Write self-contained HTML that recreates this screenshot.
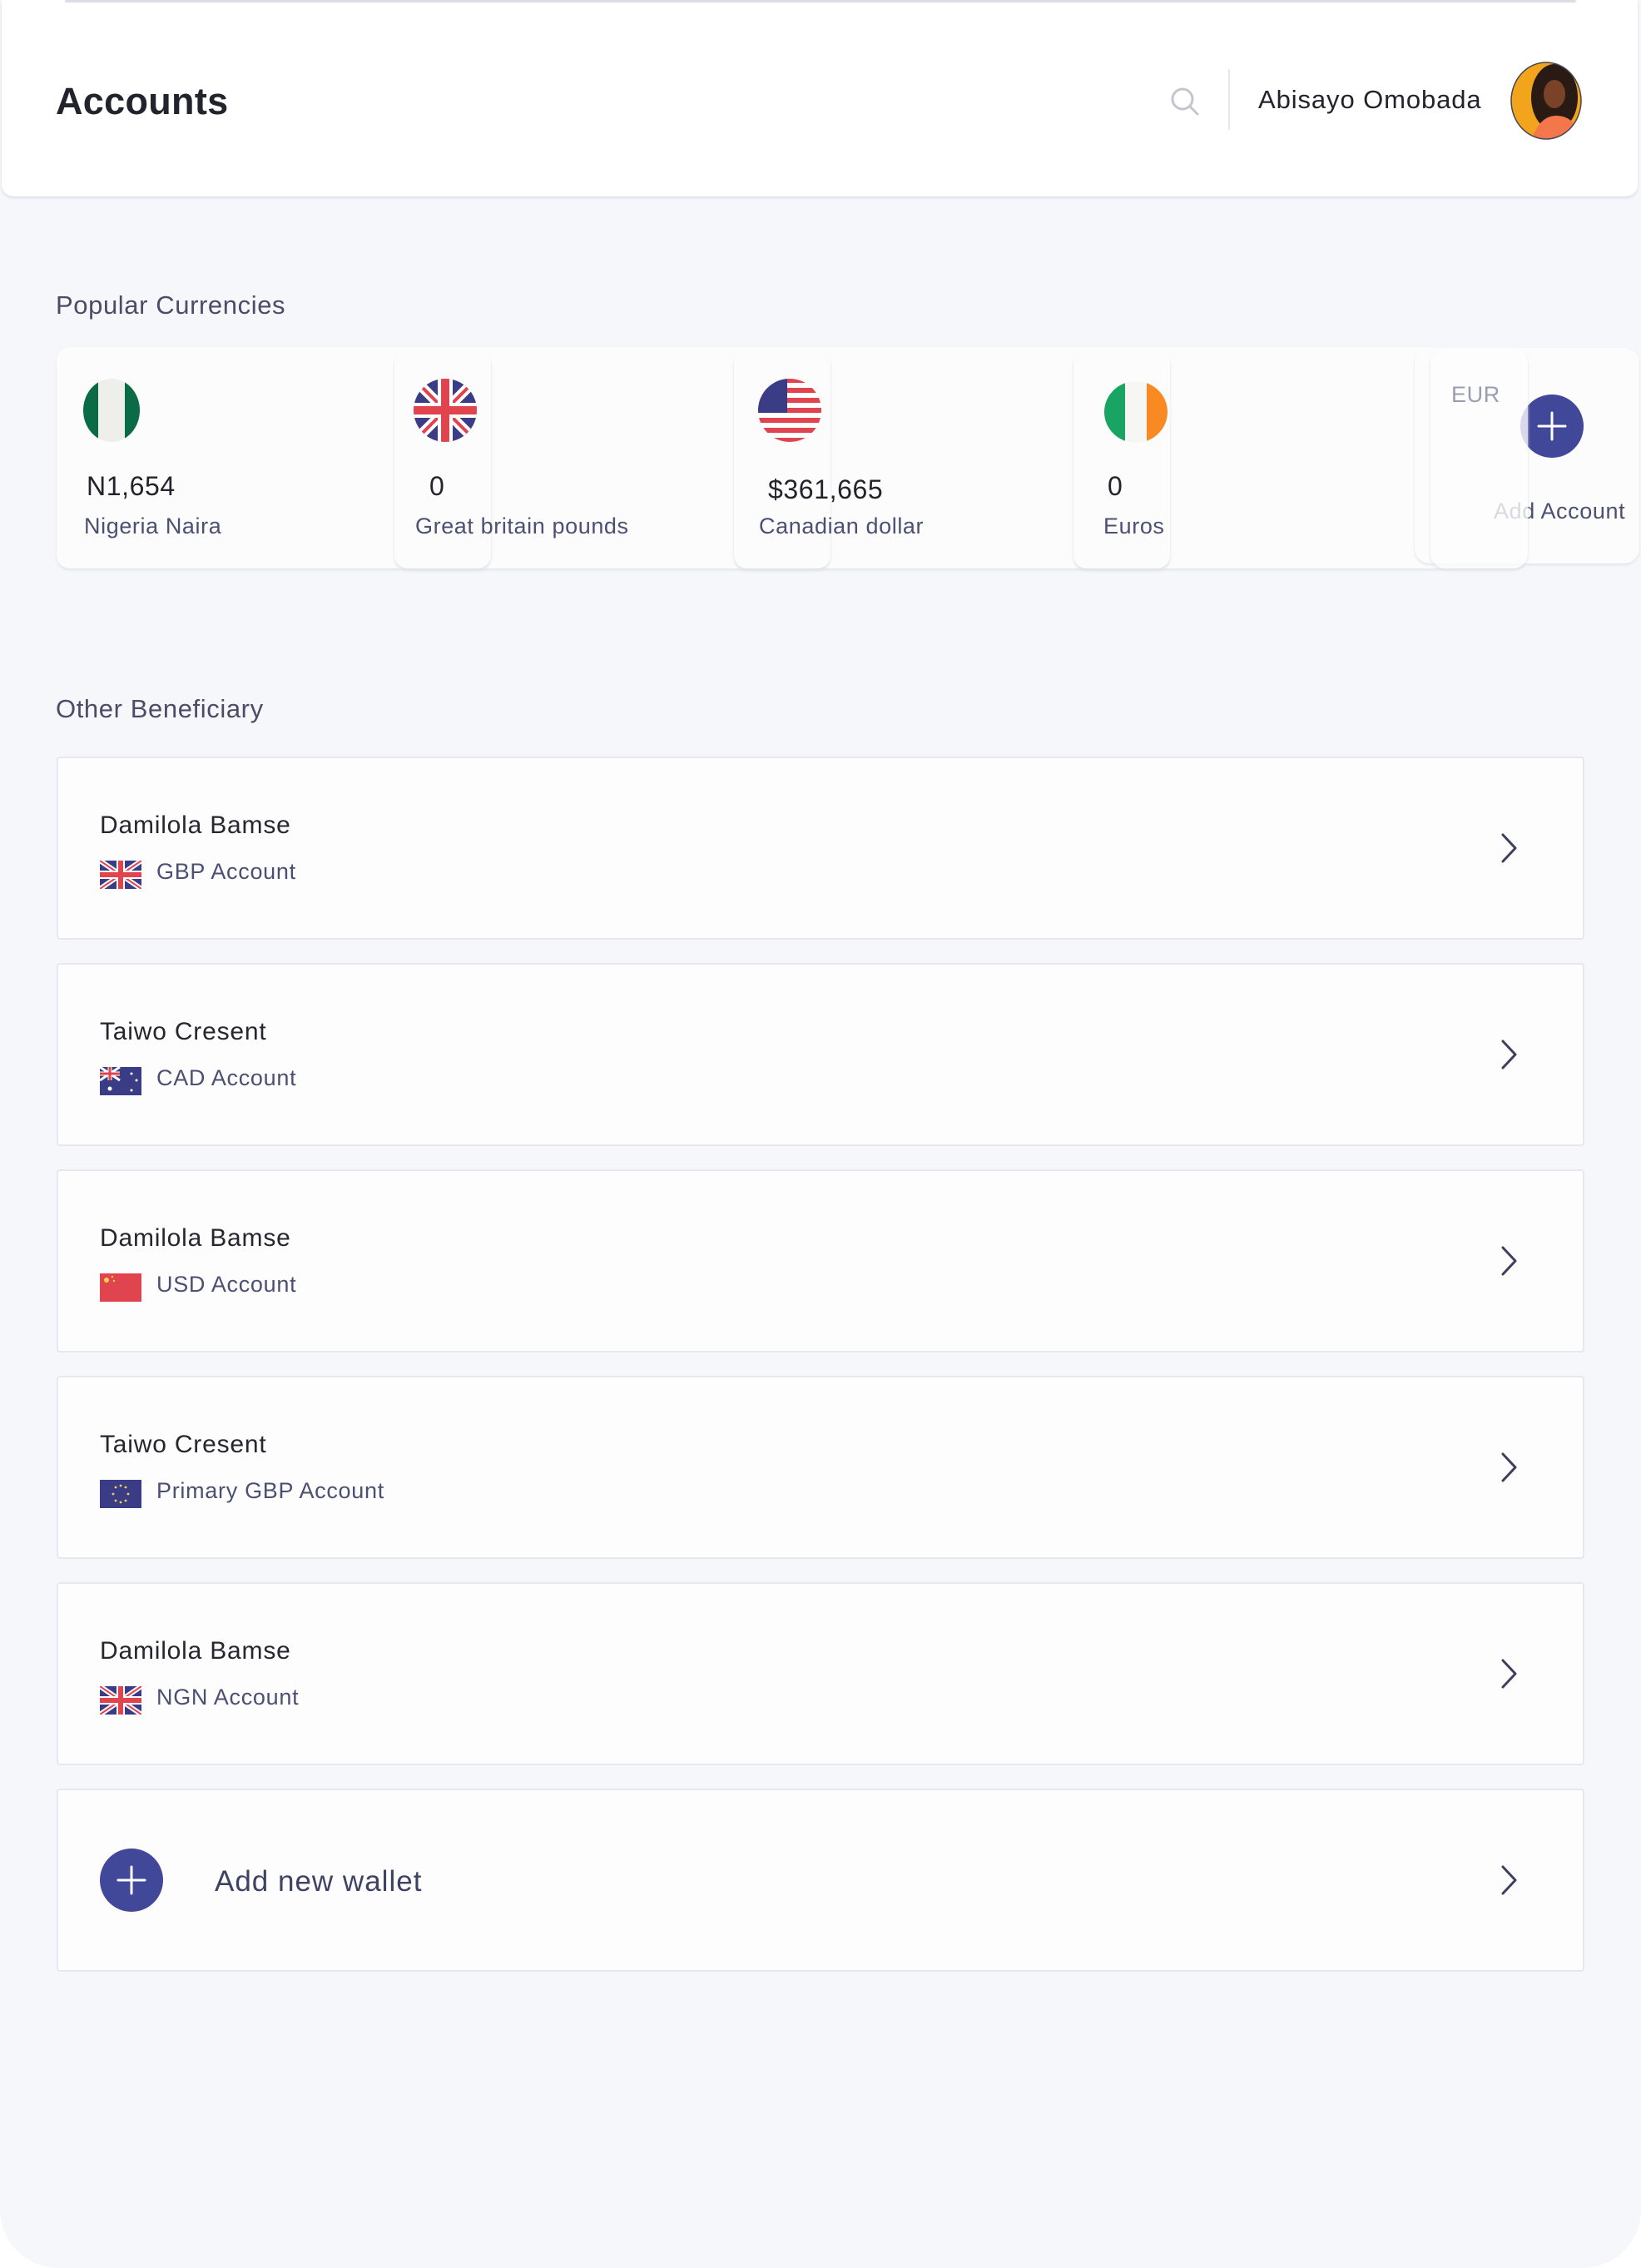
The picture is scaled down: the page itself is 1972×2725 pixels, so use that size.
<!DOCTYPE html>
<html><head><meta charset="utf-8"><style>
*{margin:0;padding:0;box-sizing:border-box}
body{width:1972px;height:2725px;background:#fff;font-family:"Liberation Sans",sans-serif;overflow:hidden;position:relative}
.page{position:absolute;left:0;top:0;width:1972px;height:2725px;background:#f6f7fa;border-radius:0 0 70px 70px}
.abs{position:absolute}
.header{left:2px;top:0;width:1966px;height:236px;background:#fff;border-radius:0 0 14px 14px;box-shadow:0 2px 3px #dcdde6}
.topline{left:78px;top:0;width:1816px;height:3px;background:#dcdde8;border-radius:2px}
.t{position:absolute;white-space:nowrap;letter-spacing:0.6px}
.strip{left:68px;top:417px;width:1767px;height:266px;background:#fcfcfd;border-radius:16px;box-shadow:0 2px 3px #e2e3ea}
.row{position:absolute;left:68px;width:1836px;height:220px;background:#fdfdfe;border:2px solid #e6e7f0;border-radius:4px}
.row .n{left:50px;top:64px;font-size:30px;color:#26262f;letter-spacing:0.8px}
.row .s{left:118px;top:121px;font-size:27px;color:#4b5073;letter-spacing:0.7px}
.row .f{position:absolute;left:50px;top:123px;width:50px;height:34px}
.chev{position:absolute;left:1732px;top:88px}
</style></head><body>
<div class="page">
<div class="abs header"></div>
<div class="abs topline"></div>
<div class="t" style="left:67px;top:96px;font-size:45px;color:#23232d;font-weight:bold;letter-spacing:0.3px;-webkit-text-stroke:0px">Accounts</div>
<svg class="abs" style="left:1404px;top:102px" width="40" height="40" viewBox="0 0 40 40"><circle cx="17" cy="17" r="12" fill="none" stroke="#c4c5cf" stroke-width="3"/><path d="M26 26 L35 35" stroke="#c4c5cf" stroke-width="3" stroke-linecap="round"/></svg>
<div class="abs" style="left:1476px;top:83px;width:2px;height:73px;background:#e7e8ee"></div>
<div class="t" style="left:1512px;top:102px;font-size:31px;color:#23232d;letter-spacing:0.9px">Abisayo Omobada</div>
<svg class="abs" style="left:1808px;top:73px" width="96" height="96" viewBox="0 0 96 96"><defs><clipPath id="c"><ellipse cx="50" cy="48" rx="42" ry="46"/></clipPath></defs><g clip-path="url(#c)"><rect width="96" height="96" fill="#f2a51c"/><ellipse cx="60" cy="44" rx="28" ry="40" fill="#2a1a14"/><ellipse cx="60" cy="40" rx="13" ry="17" fill="#7a4328"/><path d="M32 96 Q42 66 62 66 Q86 66 92 96Z" fill="#f3774b"/></g><ellipse cx="50" cy="48" rx="42" ry="46" fill="none" stroke="#445" stroke-width="1.5"/></svg>

<div class="t" style="left:67px;top:349px;font-size:31px;color:#4a4c68">Popular Currencies</div>
<div class="abs strip"></div>
<div class="abs" style="left:474px;top:420px;width:116px;height:263px;background:#fcfcfd;border-radius:16px;box-shadow:0 3px 3px #e2e3ea"></div>
<div class="abs" style="left:882px;top:420px;width:116px;height:263px;background:#fcfcfd;border-radius:16px;box-shadow:0 3px 3px #e2e3ea"></div>
<div class="abs" style="left:1290px;top:420px;width:116px;height:263px;background:#fcfcfd;border-radius:16px;box-shadow:0 3px 3px #e2e3ea"></div>
<svg class="abs" style="left:98px;top:454px" width="72" height="78" viewBox="0 0 72 78"><defs><clipPath id="n"><ellipse cx="36" cy="39" rx="34" ry="38"/></clipPath></defs><g clip-path="url(#n)"><rect width="72" height="78" fill="#eeeeea"/><rect width="20" height="78" fill="#0b6b47"/><rect x="52" width="20" height="78" fill="#0b6b47"/></g></svg>
<svg class="abs" style="left:496px;top:454px" width="78" height="78" viewBox="0 0 78 78"><defs><clipPath id="u"><ellipse cx="39" cy="39" rx="38" ry="38"/></clipPath></defs><g clip-path="url(#u)"><rect width="78" height="78" fill="#3a3d86"/><path d="M0 0L78 78M78 0L0 78" stroke="#fff" stroke-width="12"/><path d="M0 0L78 78M78 0L0 78" stroke="#e0444f" stroke-width="4"/><path d="M39 0V78M0 39H78" stroke="#fff" stroke-width="18"/><path d="M39 0V78M0 39H78" stroke="#e0444f" stroke-width="10"/></g></svg>
<svg class="abs" style="left:910px;top:454px" width="78" height="78" viewBox="0 0 78 78"><defs><clipPath id="us"><ellipse cx="39" cy="39" rx="38" ry="38"/></clipPath></defs><g clip-path="url(#us)"><rect width="78" height="78" fill="#fff"/><g fill="#e0444f"><rect y="0" width="78" height="6"/><rect y="12" width="78" height="6"/><rect y="24" width="78" height="6"/><rect y="36" width="78" height="6"/><rect y="48" width="78" height="6"/><rect y="60" width="78" height="6"/><rect y="72" width="78" height="6"/></g><rect width="36" height="42" fill="#3a3d86"/></g></svg>
<svg class="abs" style="left:1326px;top:458px" width="78" height="74" viewBox="0 0 78 74"><defs><clipPath id="ie"><ellipse cx="39" cy="37" rx="38" ry="37"/></clipPath></defs><g clip-path="url(#ie)"><rect width="26" height="74" fill="#1aa463"/><rect x="26" width="26" height="74" fill="#f6f6f4"/><rect x="52" width="26" height="74" fill="#f98a22"/></g></svg>
<div class="t" style="left:104px;top:566px;font-size:32px;color:#23232d">N1,654</div>
<div class="t" style="left:101px;top:617px;font-size:27px;color:#4b5073">Nigeria Naira</div>
<div class="t" style="left:516px;top:566px;font-size:32px;color:#23232d">0</div>
<div class="t" style="left:499px;top:617px;font-size:27px;color:#4b5073">Great britain pounds</div>
<div class="t" style="left:923px;top:570px;font-size:32px;color:#23232d">$361,665</div>
<div class="t" style="left:912px;top:617px;font-size:27px;color:#4b5073">Canadian dollar</div>
<div class="t" style="left:1331px;top:566px;font-size:32px;color:#23232d">0</div>
<div class="t" style="left:1326px;top:617px;font-size:27px;color:#4b5073">Euros</div>
<div class="abs" style="left:1700px;top:418px;width:270px;height:259px;background:#fcfcfd;border-radius:18px;box-shadow:0 2px 3px #e2e3ea"></div>
<svg class="abs" style="left:1827px;top:474px" width="76" height="76" viewBox="0 0 76 76"><circle cx="38" cy="38" r="38" fill="#414799"/><path d="M38 22V54M22 38H54" stroke="#fff" stroke-width="3" stroke-linecap="round"/></svg>
<div class="t" style="left:1795px;top:599px;font-size:27px;color:#4b5073">Add Account</div>
<div class="abs" style="left:1719px;top:418px;width:117px;height:265px;background:rgba(252,252,253,0.8);border-radius:18px;box-shadow:0 2px 3px #e2e3ea"></div>
<div class="t" style="left:1744px;top:459px;font-size:27px;color:#9a9cb2">EUR</div>

<div class="t" style="left:67px;top:834px;font-size:31px;color:#4a4c68">Other Beneficiary</div>

<div class="row" style="top:909px"><div class="t n">Damilola Bamse</div>
<svg class="f" viewBox="0 0 50 34"><rect width="50" height="34" fill="#3a3d86"/><path d="M0 0L50 34M50 0L0 34" stroke="#fff" stroke-width="6"/><path d="M0 0L50 34M50 0L0 34" stroke="#e0444f" stroke-width="2"/><path d="M25 0V34M0 17H50" stroke="#fff" stroke-width="10"/><path d="M25 0V34M0 17H50" stroke="#e0444f" stroke-width="6"/></svg>
<div class="t s">GBP Account</div>
<svg class="chev" width="24" height="40" viewBox="0 0 24 40"><path d="M4 4L19 20L4 36" fill="none" stroke="#3c3f5e" stroke-width="3" stroke-linecap="round" stroke-linejoin="round"/></svg></div>

<div class="row" style="top:1157px"><div class="t n">Taiwo Cresent</div>
<svg class="f" viewBox="0 0 50 34"><rect width="50" height="34" fill="#3a3d86"/><path d="M0 0L24 16M24 0L0 16" stroke="#fff" stroke-width="3"/><path d="M12 0V16M0 8H24" stroke="#fff" stroke-width="5"/><path d="M12 0V16M0 8H24" stroke="#e0444f" stroke-width="3"/><circle cx="12" cy="26" r="2.5" fill="#fff"/><circle cx="38" cy="8" r="1.5" fill="#fff"/><circle cx="44" cy="16" r="1.5" fill="#fff"/><circle cx="38" cy="28" r="1.5" fill="#fff"/></svg>
<div class="t s">CAD Account</div>
<svg class="chev" width="24" height="40" viewBox="0 0 24 40"><path d="M4 4L19 20L4 36" fill="none" stroke="#3c3f5e" stroke-width="3" stroke-linecap="round" stroke-linejoin="round"/></svg></div>

<div class="row" style="top:1405px"><div class="t n">Damilola Bamse</div>
<svg class="f" viewBox="0 0 50 34"><rect width="50" height="34" fill="#e0444f"/><circle cx="8" cy="8" r="3" fill="#f7d34a"/><circle cx="15" cy="4" r="1.2" fill="#f7d34a"/><circle cx="17" cy="9" r="1.2" fill="#f7d34a"/></svg>
<div class="t s">USD Account</div>
<svg class="chev" width="24" height="40" viewBox="0 0 24 40"><path d="M4 4L19 20L4 36" fill="none" stroke="#3c3f5e" stroke-width="3" stroke-linecap="round" stroke-linejoin="round"/></svg></div>

<div class="row" style="top:1653px"><div class="t n">Taiwo Cresent</div>
<svg class="f" viewBox="0 0 50 34"><rect width="50" height="34" fill="#3a3d86"/><g fill="#f7d34a"><circle cx="25" cy="7" r="1.4"/><circle cx="31" cy="9" r="1.4"/><circle cx="34" cy="17" r="1.4"/><circle cx="31" cy="25" r="1.4"/><circle cx="25" cy="27" r="1.4"/><circle cx="19" cy="25" r="1.4"/><circle cx="16" cy="17" r="1.4"/><circle cx="19" cy="9" r="1.4"/></g></svg>
<div class="t s">Primary GBP Account</div>
<svg class="chev" width="24" height="40" viewBox="0 0 24 40"><path d="M4 4L19 20L4 36" fill="none" stroke="#3c3f5e" stroke-width="3" stroke-linecap="round" stroke-linejoin="round"/></svg></div>

<div class="row" style="top:1901px"><div class="t n">Damilola Bamse</div>
<svg class="f" viewBox="0 0 50 34"><rect width="50" height="34" fill="#3a3d86"/><path d="M0 0L50 34M50 0L0 34" stroke="#fff" stroke-width="6"/><path d="M0 0L50 34M50 0L0 34" stroke="#e0444f" stroke-width="2"/><path d="M25 0V34M0 17H50" stroke="#fff" stroke-width="10"/><path d="M25 0V34M0 17H50" stroke="#e0444f" stroke-width="6"/></svg>
<div class="t s">NGN Account</div>
<svg class="chev" width="24" height="40" viewBox="0 0 24 40"><path d="M4 4L19 20L4 36" fill="none" stroke="#3c3f5e" stroke-width="3" stroke-linecap="round" stroke-linejoin="round"/></svg></div>

<div class="row" style="top:2149px">
<svg class="abs" style="left:50px;top:70px" width="76" height="76" viewBox="0 0 76 76"><circle cx="38" cy="38" r="38" fill="#414799"/><path d="M38 22V54M22 38H54" stroke="#fff" stroke-width="3" stroke-linecap="round"/></svg>
<div class="t" style="left:188px;top:90px;font-size:35px;color:#3e4263;letter-spacing:1px">Add new wallet</div>
<svg class="chev" width="24" height="40" viewBox="0 0 24 40"><path d="M4 4L19 20L4 36" fill="none" stroke="#3c3f5e" stroke-width="3" stroke-linecap="round" stroke-linejoin="round"/></svg></div>
</div>
</body></html>
